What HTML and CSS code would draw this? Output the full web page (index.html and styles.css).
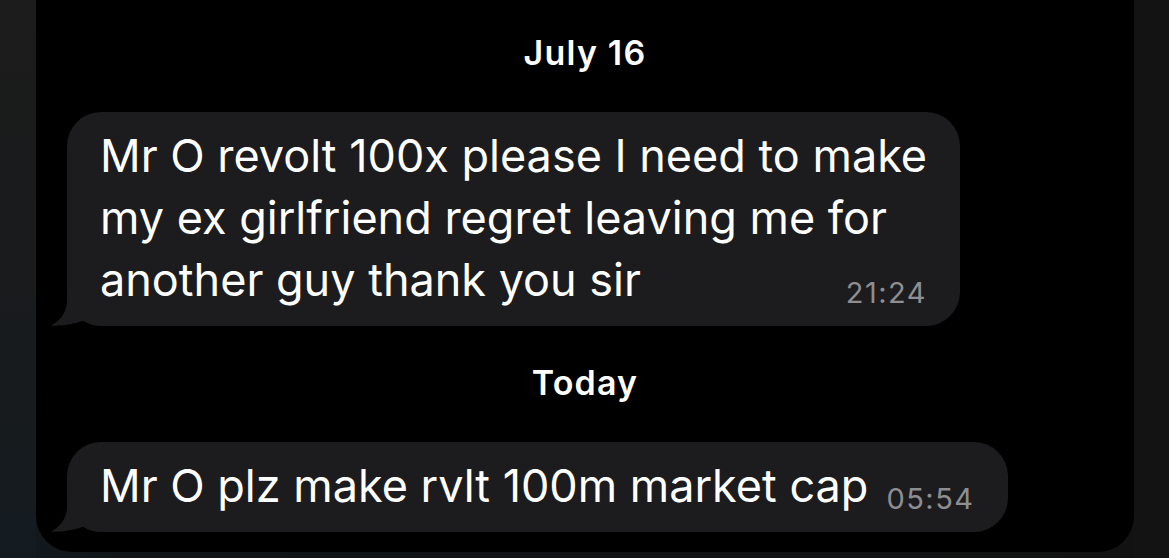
FILE: index.html
```html
<!DOCTYPE html>
<html lang="en">
<head>
    <meta charset="UTF-8">
    <meta name="viewport" content="width=device-width, initial-scale=1.0">
    <title>Chat</title>
    <link rel="stylesheet" href="styles.css">
</head>
<body>
    <div class="screen">
        <div class="edge edge-left"></div>
        <main class="chat">
            <div class="day">July 16</div>

            <div class="bubble">
                <span class="text">Mr O revolt 100x please I need to make<br>my ex girlfriend regret leaving me for<br>another guy thank you sir</span><span class="time">21:24</span>
                <svg class="tail" width="40" height="32" viewBox="0 0 40 32">
                    <path d="M16 0 L16 6 C16 18 10 26 0 31.5 C10 32.5 24 30 36 25.5 L40 25 L40 0 Z"/>
                </svg>
            </div>

            <div class="day">Today</div>

            <div class="bubble">
                <span class="text">Mr O plz make rvlt 100m market cap</span><span class="time">05:54</span>
                <svg class="tail" width="40" height="32" viewBox="0 0 40 32">
                    <path d="M16 0 L16 6 C16 18 10 26 0 31.5 C10 32.5 24 30 36 25.5 L40 25 L40 0 Z"/>
                </svg>
            </div>
        </main>
        <div class="edge edge-right"></div>
    </div>
</body>
</html>
```

FILE: styles.css
```css
body {
    margin: 0;
    padding: 0;
    background: #111518;
    font-family: Inter, "Noto Sans", sans-serif;
    color: #fff;
}
.screen {
    display: grid;
    grid-template-columns: 36px 1fr 35px;
    height: 558px;
    overflow: hidden;
    background: linear-gradient(to right, #121a1f 0, #111518 120px, #121212 100%);
}
.edge-left {
    background: linear-gradient(to bottom, #1c1c1c 0, #1a1b1c 40%, #141b20 100%);
}
.edge-right {
    background: #131313;
}
.chat {
    background: #000;
    height: 552px;
    border-radius: 0 0 36px 36px;
    padding: 33px 31px 0;
    box-sizing: border-box;
    display: flex;
    flex-direction: column;
    align-items: flex-start;
}
.day {
    align-self: center;
    margin-bottom: 39px;
    font-size: 34px;
    line-height: 40px;
    font-weight: 600;
    letter-spacing: 1.2px;
}
.bubble {
    position: relative;
    width: fit-content;
    margin-bottom: 37px;
    background: #1c1c1e;
    border-radius: 34px;
    padding: 13px 33px 15px;
    font-size: 45px;
    line-height: 62px;
}
.time {
    float: right;
    margin: 29px 0 0 18px;
    font-size: 29px;
    line-height: 29px;
    letter-spacing: 1.5px;
    color: #8e8e91;
}
.tail {
    position: absolute;
    left: -16px;
    bottom: 0;
    fill: #1c1c1e;
}
```
